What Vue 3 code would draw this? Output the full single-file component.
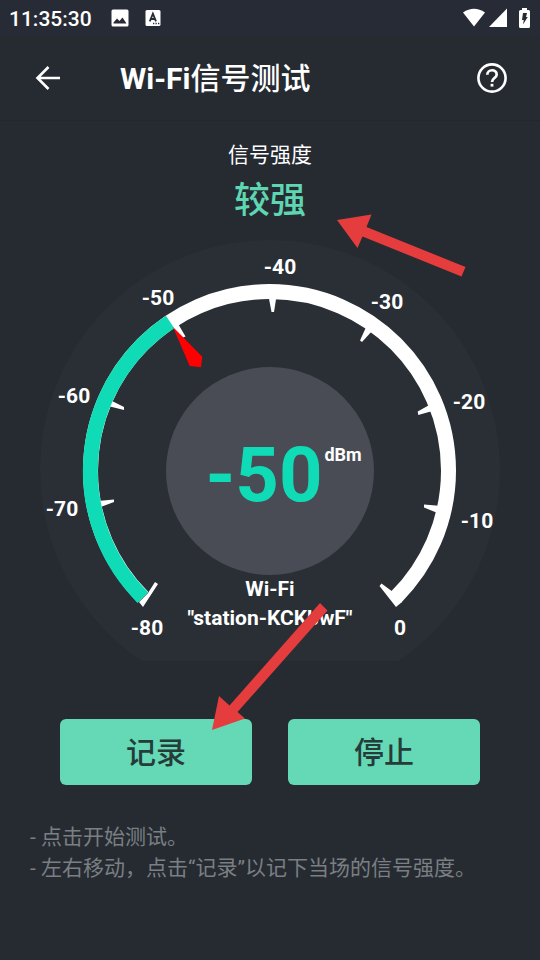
<script setup>
const ticks = [
  { label: '-80', x: -123, y: 164, points: '-127,136 -131,131 -122,122 -115,111 -112,113' },
  { label: '-70', x: -208, y: 45, points: '-172,30 -156,28.5 -156,31 -172,37' },
  { label: '-60', x: -196, y: -68, points: '-160,-71 -146,-64 -146,-61 -162,-65' },
  { label: '-50', x: -112, y: -166, points: '-93,-149 -84.5,-134.5 -87,-133.5 -98,-144' },
  { label: '-40', x: 10, y: -197, points: '-1.5,-175 1.5,-159 4,-159 6.5,-175' },
  { label: '-30', x: 117, y: -162, points: '97,-146 90,-130.5 92,-129 103,-141' },
  { label: '-20', x: 199, y: -62, points: '162,-67.5 147.7,-59.5 148.3,-56 166,-61' },
  { label: '-10', x: 207, y: 57, points: '172,35 154,33.5 154,36.5 170,43' },
  { label: '0', x: 130, y: 164, points: '132,131 126,136 109.5,115 111.5,112.5 123,121' },
]
const hints = ['- 点击开始测试。', '- 左右移动，点击“记录”以记下当场的信号强度。']
</script>

<template>
  <div class="screen">
    <div class="status">
      <span class="time">11:35:30</span>
      <svg class="s-photo" width="18" height="18" viewBox="0 0 18 18"><rect x="0.5" y="0.5" width="17" height="17" rx="1.5" fill="#fff" /><path d="M2.500 14.500V13.500L6 9.500 8.500 12 11.500 8.500 15.500 14.500Z" fill="#272b35" /></svg>
      <svg class="s-lang" width="16" height="18" viewBox="0 0 16 18"><rect x="0.5" y="1" width="15" height="16" rx="1.5" fill="#fff" /><path d="M4.800 12.400 7.900 4.600 11 12.400M5.800 10H10" fill="none" stroke="#272b35" stroke-width="1.8" /><path d="M8 14.500h1.300M10.500 14.500h1.300M13 14.500h1.300" stroke="#272b35" stroke-width="1.3" /></svg>
      <span class="spacer"></span>
      <svg width="22" height="20" viewBox="0 0 22 20"><path d="M0 4.500Q11-3 22 4.500L11 18.500Z" fill="#fff" /></svg>
      <svg class="s-cell" width="18" height="20" viewBox="0 0 18 20"><path d="M18 0.500V19H0Z" fill="#fff" /></svg>
      <svg class="s-batt" width="11" height="20" viewBox="0 0 11 20"><path d="M0 3.500Q0 2 1.500 2H3V0H8V2H9.500Q11 2 11 3.500V18.500Q11 20 9.500 20H1.500Q0 20 0 18.500Z" fill="#fff" /><path d="M4 5H8L7 9H8.700L4 16.500L4.800 12H3Z" fill="#272b35" /></svg>
    </div>
    <header class="bar">
      <button class="icon-btn" aria-label="返回">
        <svg width="26" height="26" viewBox="0 0 26 26" fill="none" stroke="#fff" stroke-width="2.6"><path d="M25 13H3M13.500 2 2.500 13 13.500 24" /></svg>
      </button>
      <h1><b>Wi-Fi</b>信号测试</h1>
      <button class="icon-btn" aria-label="帮助">
        <svg width="30" height="30" viewBox="0 0 30 30" fill="none" stroke="#fff"><circle cx="15" cy="15" r="13.600" stroke-width="2.600" /><path d="M10.300 11.800C10.300 5.800 19.700 5.800 19.700 11.500C19.700 15 15 15.200 15 19" stroke-width="2.700" /><path d="M15 20.800V23.600" stroke-width="2.800" /></svg>
      </button>
    </header>
    <main>
      <p class="caption">信号强度</p>
      <p class="level">较强</p>
      <svg class="gauge" viewBox="-230 -231 460 421">
        <circle r="230" cy="-1" fill="#292f35" />
        <path d="M-127.100 126.100A179 179 0 1 1 126.100 126.100" fill="none" stroke="#fff" stroke-width="15" />
        <polygon v-for="t in ticks" :key="t.label" :points="t.points" fill="#fff" />
        <path d="M-127.100 126.600A179 179 0 0 1-99.900-149" fill="none" stroke="#0fdcb6" stroke-width="15" />
        <polygon points="-97,-144 -67.700,-114.300 -69,-103.700 -80.300,-105" fill="#f00" />
        <circle r="104" fill="#494c54" />
        <g class="labels">
          <text v-for="t in ticks" :key="t.label" :x="t.x" :y="t.y">{{ t.label }}</text>
          <text x="0" y="125">Wi-Fi</text>
          <text x="0" y="154">"station-KCKbwF"</text>
          <text class="value" x="-6" y="30">-50</text>
          <text class="unit" x="73" y="-10">dBm</text>
        </g>
      </svg>
      <div class="actions">
        <button>记录</button>
        <button>停止</button>
      </div>
      <div class="hints">
        <p v-for="h in hints" :key="h">{{ h }}</p>
      </div>
      <svg class="arrows" viewBox="0 0 540 840" fill="#e53c3d">
        <polygon points="337,99 371.500,93.500 366.500,106 465.500,146 461.500,155.500 362.500,115.500 357.500,127" />
        <polygon points="212,609 219,575 229.500,584.500 320,482 327.500,489.500 237.500,591 245,597.500" />
      </svg>
    </main>
  </div>
</template>

<style>
body {
  margin: 0;
  background: #262b32;
}
</style>

<style scoped>
.screen {
  min-height: 100vh;
  background: #262b32;
  color: #fff;
  font-family: Roboto, "Noto Sans CJK SC", sans-serif;
}
.status {
  display: flex;
  align-items: center;
  height: 36px;
  padding: 0 10px 0 9px;
  background: #272b35;
}
.time {
  padding-top: 1px;
  font-size: 21px;
  font-weight: 500;
}
.s-photo {
  margin-left: 19px;
}
.s-lang {
  margin-left: 16px;
}
.spacer {
  flex: 1;
}
.s-cell {
  margin-left: 4px;
}
.s-batt {
  margin-left: 12px;
}
.bar {
  display: flex;
  align-items: center;
  height: 84px;
  padding: 0 33px 0 35px;
  border-bottom: 1px solid #22262d;
}
.icon-btn {
  display: flex;
  padding: 0;
  border: 0;
  background: none;
}
h1 {
  flex: 1;
  margin: 0 0 0 59px;
  padding-top: 2px;
  font-size: 30px;
  line-height: 40px;
  font-weight: 500;
}
b {
  font-weight: 700;
}
main {
  position: relative;
}
p {
  margin: 0;
}
.caption {
  padding-top: 18px;
  font-size: 21px;
  line-height: 32px;
  text-align: center;
}
.level {
  padding-top: 3px;
  font-size: 36px;
  line-height: 54px;
  font-weight: 500;
  text-align: center;
  color: #5fd6b2;
}
.gauge {
  display: block;
  width: calc(100% - 80px);
  margin: 12px auto 0;
}
.labels {
  fill: #fff;
  font-size: 21px;
  font-weight: 700;
  text-anchor: middle;
}
.value {
  fill: #0fdcb6;
  font-size: 76px;
}
.unit {
  font-size: 18px;
}
.actions {
  display: flex;
  gap: 36px;
  margin: 58px 60px 0;
}
.actions button {
  flex: 1;
  height: 66px;
  padding: 2px 0 0;
  border: 0;
  border-radius: 6px;
  background: #65d8b5;
  color: #263c3a;
  font: 500 30px/44px Roboto, "Noto Sans CJK SC", sans-serif;
}
.hints {
  padding: 37px 30px 0;
  font-size: 21px;
  line-height: 31px;
  color: #7a7f83;
}
.arrows {
  position: absolute;
  top: 0;
  left: 0;
  width: 100%;
  pointer-events: none;
}
</style>
